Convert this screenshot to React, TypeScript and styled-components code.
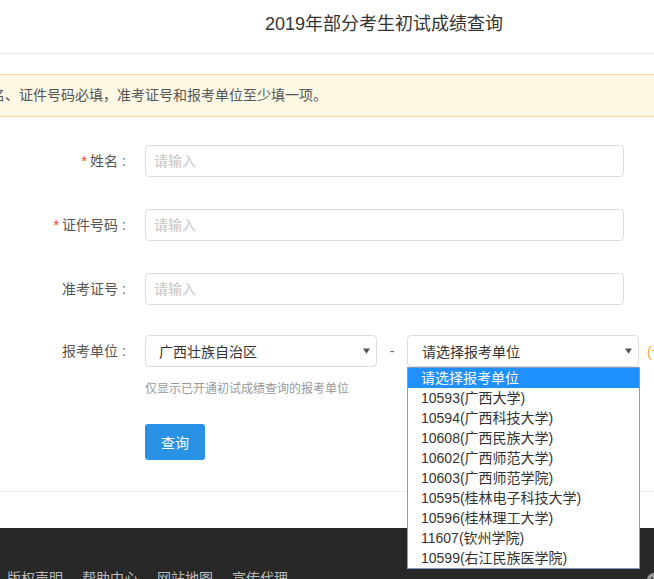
import React from 'react'
import styled, { createGlobalStyle } from 'styled-components'

const FONT = '"Liberation Sans", "Noto Sans CJK SC", sans-serif'

const units = [
	'请选择报考单位',
	'10593(广西大学)',
	'10594(广西科技大学)',
	'10608(广西民族大学)',
	'10602(广西师范大学)',
	'10603(广西师范学院)',
	'10595(桂林电子科技大学)',
	'10596(桂林理工大学)',
	'11607(钦州学院)',
	'10599(右江民族医学院)'
]

const footerLinks = ['版权声明', '帮助中心', '网站地图', '宣传代理']

const App = () => {
	return (
		<Page>
			<GlobalStyle />
			<Header>
				<Inner>
					<Title>2019年部分考生初试成绩查询</Title>
				</Inner>
			</Header>
			<Inner>
				<Notice>姓名、证件号码必填，准考证号和报考单位至少填一项。</Notice>
				<Form>
					<Row $gap={32}>
						<Label $required>姓名</Label>
						<Input placeholder="请输入" />
					</Row>
					<Row $gap={32}>
						<Label $required>证件号码</Label>
						<Input placeholder="请输入" />
					</Row>
					<Row $gap={30}>
						<Label>准考证号</Label>
						<Input placeholder="请输入" />
					</Row>
					<Row>
						<Label>报考单位</Label>
						<Controls>
							<SelectBox>
								广西壮族自治区
								<Arrow />
							</SelectBox>
							<Dash>-</Dash>
							<SelectWrap>
								<SelectBox $indent={14}>
									请选择报考单位
									<Arrow />
								</SelectBox>
								<Dropdown>
									{units.map((u, i) => (
										<Option key={u} $active={i === 0}>{u}</Option>
									))}
								</Dropdown>
							</SelectWrap>
							<Hint>(请选择报考单位后查询)</Hint>
						</Controls>
					</Row>
					<Row>
						<span />
						<Help>仅显示已开通初试成绩查询的报考单位</Help>
					</Row>
					<Row>
						<span />
						<div>
							<Button type="button">查询</Button>
						</div>
					</Row>
				</Form>
			</Inner>
			<Divider />
			<Footer>
				{footerLinks.map(l => (
					<FooterLink key={l}>{l}</FooterLink>
				))}
				<Wechat viewBox="0 0 20 20">
					<circle cx="8" cy="9" r="7" fill="#9a9a9a" />
					<circle cx="13" cy="12" r="6" fill="#bdbdbd" />
					<circle cx="6" cy="7" r="1" fill="#282828" />
					<circle cx="10" cy="7" r="1" fill="#282828" />
				</Wechat>
			</Footer>
		</Page>
	)
}

const Arrow = () => (
	<ArrowIcon viewBox="0 0 8 6">
		<path d="M0 0 L8 0 L4 6 Z" fill="#555" />
	</ArrowIcon>
)

const GlobalStyle = createGlobalStyle`
	html, body {
		margin: 0;
		padding: 0;
		background: #fff;
		overflow: hidden;
	}
	body {
		font-family: ${FONT};
		color: #333;
	}
`

const Page = styled.div`
	width: 654px;
	height: 579px;
	overflow: hidden;
	display: flex;
	flex-direction: column;
	font-family: ${FONT};
`
const Header = styled.header`
	height: 53px;
	border-bottom: 1px solid #e6e6e6;
	flex-shrink: 0;
`
const Inner = styled.div`
	width: 900px;
	margin-left: -66px;
	flex-shrink: 0;
`
const Title = styled.h1`
	margin: 0;
	font-size: 18px;
	font-weight: normal;
	line-height: 48px;
	text-align: center;
	color: #333;
`
const Notice = styled.div`
	margin-top: 20px;
	height: 41px;
	line-height: 41px;
	padding-left: 42px;
	background: #fff8e4;
	border: 1px solid #fbd98b;
	font-size: 14px;
	color: #555;
	white-space: nowrap;
`
const Form = styled.form`
	margin: 28px 0 0;
`
const Row = styled.div<{ $gap?: number }>`
	display: grid;
	grid-template-columns: 196px 1fr;
	column-gap: 15px;
	align-items: center;
	margin-bottom: ${p => p.$gap ?? 0}px;
`
const Label = styled.label<{ $required?: boolean }>`
	text-align: right;
	font-size: 14px;
	color: #555;
	line-height: 32px;
	&::before {
		content: ${p => (p.$required ? '"*"' : 'none')};
		color: #e8452c;
		font-size: 15px;
		margin-right: 3px;
	}
	&::after {
		content: ':';
		display: inline-block;
		width: 12px;
		text-align: center;
	}
`
const Input = styled.input`
	box-sizing: border-box;
	width: 479px;
	height: 32px;
	padding: 0 8px;
	border: 1px solid #dcdcdc;
	border-radius: 4px;
	font-family: ${FONT};
	font-size: 14px;
	color: #333;
	outline: none;
	&::placeholder {
		color: #c4c4c4;
	}
`
const Controls = styled.div`
	display: flex;
	align-items: center;
	white-space: nowrap;
`
const SelectWrap = styled.div`
	position: relative;
`
const SelectBox = styled.div<{ $indent?: number }>`
	box-sizing: border-box;
	width: 232px;
	height: 32px;
	padding-left: ${p => p.$indent ?? 13}px;
	padding-right: 6px;
	border: 1px solid #dcdcdc;
	border-radius: 4px;
	display: flex;
	align-items: center;
	justify-content: space-between;
	font-size: 14px;
	color: #333;
`
const ArrowIcon = styled.svg`
	width: 7px;
	height: 6px;
`
const Dash = styled.span`
	width: 30px;
	text-align: center;
	font-size: 14px;
	color: #666;
`
const Dropdown = styled.ul`
	position: absolute;
	top: 32px;
	left: 0;
	box-sizing: border-box;
	width: 233px;
	margin: 0;
	padding: 0;
	list-style: none;
	background: #fff;
	border: 1px solid #7f9dc9;
	z-index: 5;
`
const Option = styled.li<{ $active?: boolean }>`
	height: 20px;
	line-height: 20px;
	padding-left: 13px;
	font-size: 14px;
	background: ${p => (p.$active ? '#1e90ff' : '#fff')};
	color: ${p => (p.$active ? '#fff' : '#333')};
`
const Hint = styled.span`
	margin-left: 8px;
	font-size: 14px;
	color: #f0a43a;
`
const Help = styled.p`
	margin: 13px 0 0;
	font-size: 12px;
	line-height: 18px;
	color: #999;
`
const Button = styled.button`
	margin-top: 26px;
	width: 60px;
	height: 36px;
	border: none;
	border-radius: 3px;
	background: #2992e6;
	color: #fff;
	font-family: ${FONT};
	font-size: 14px;
	cursor: pointer;
`
const Divider = styled.hr`
	margin: 31px 0 0;
	border: none;
	border-top: 1px solid #ebebeb;
	flex-shrink: 0;
`
const Footer = styled.footer`
	margin-top: 36px;
	flex: 1;
	background: #282828;
	display: flex;
	align-items: flex-start;
	gap: 19px;
	padding: 41px 0 0 7px;
	position: relative;
`
const FooterLink = styled.a`
	font-size: 14px;
	line-height: 18px;
	color: #bbb;
	white-space: nowrap;
`
const Wechat = styled.svg`
	position: absolute;
	right: -12px;
	bottom: -4px;
	width: 20px;
	height: 20px;
`

export default App
